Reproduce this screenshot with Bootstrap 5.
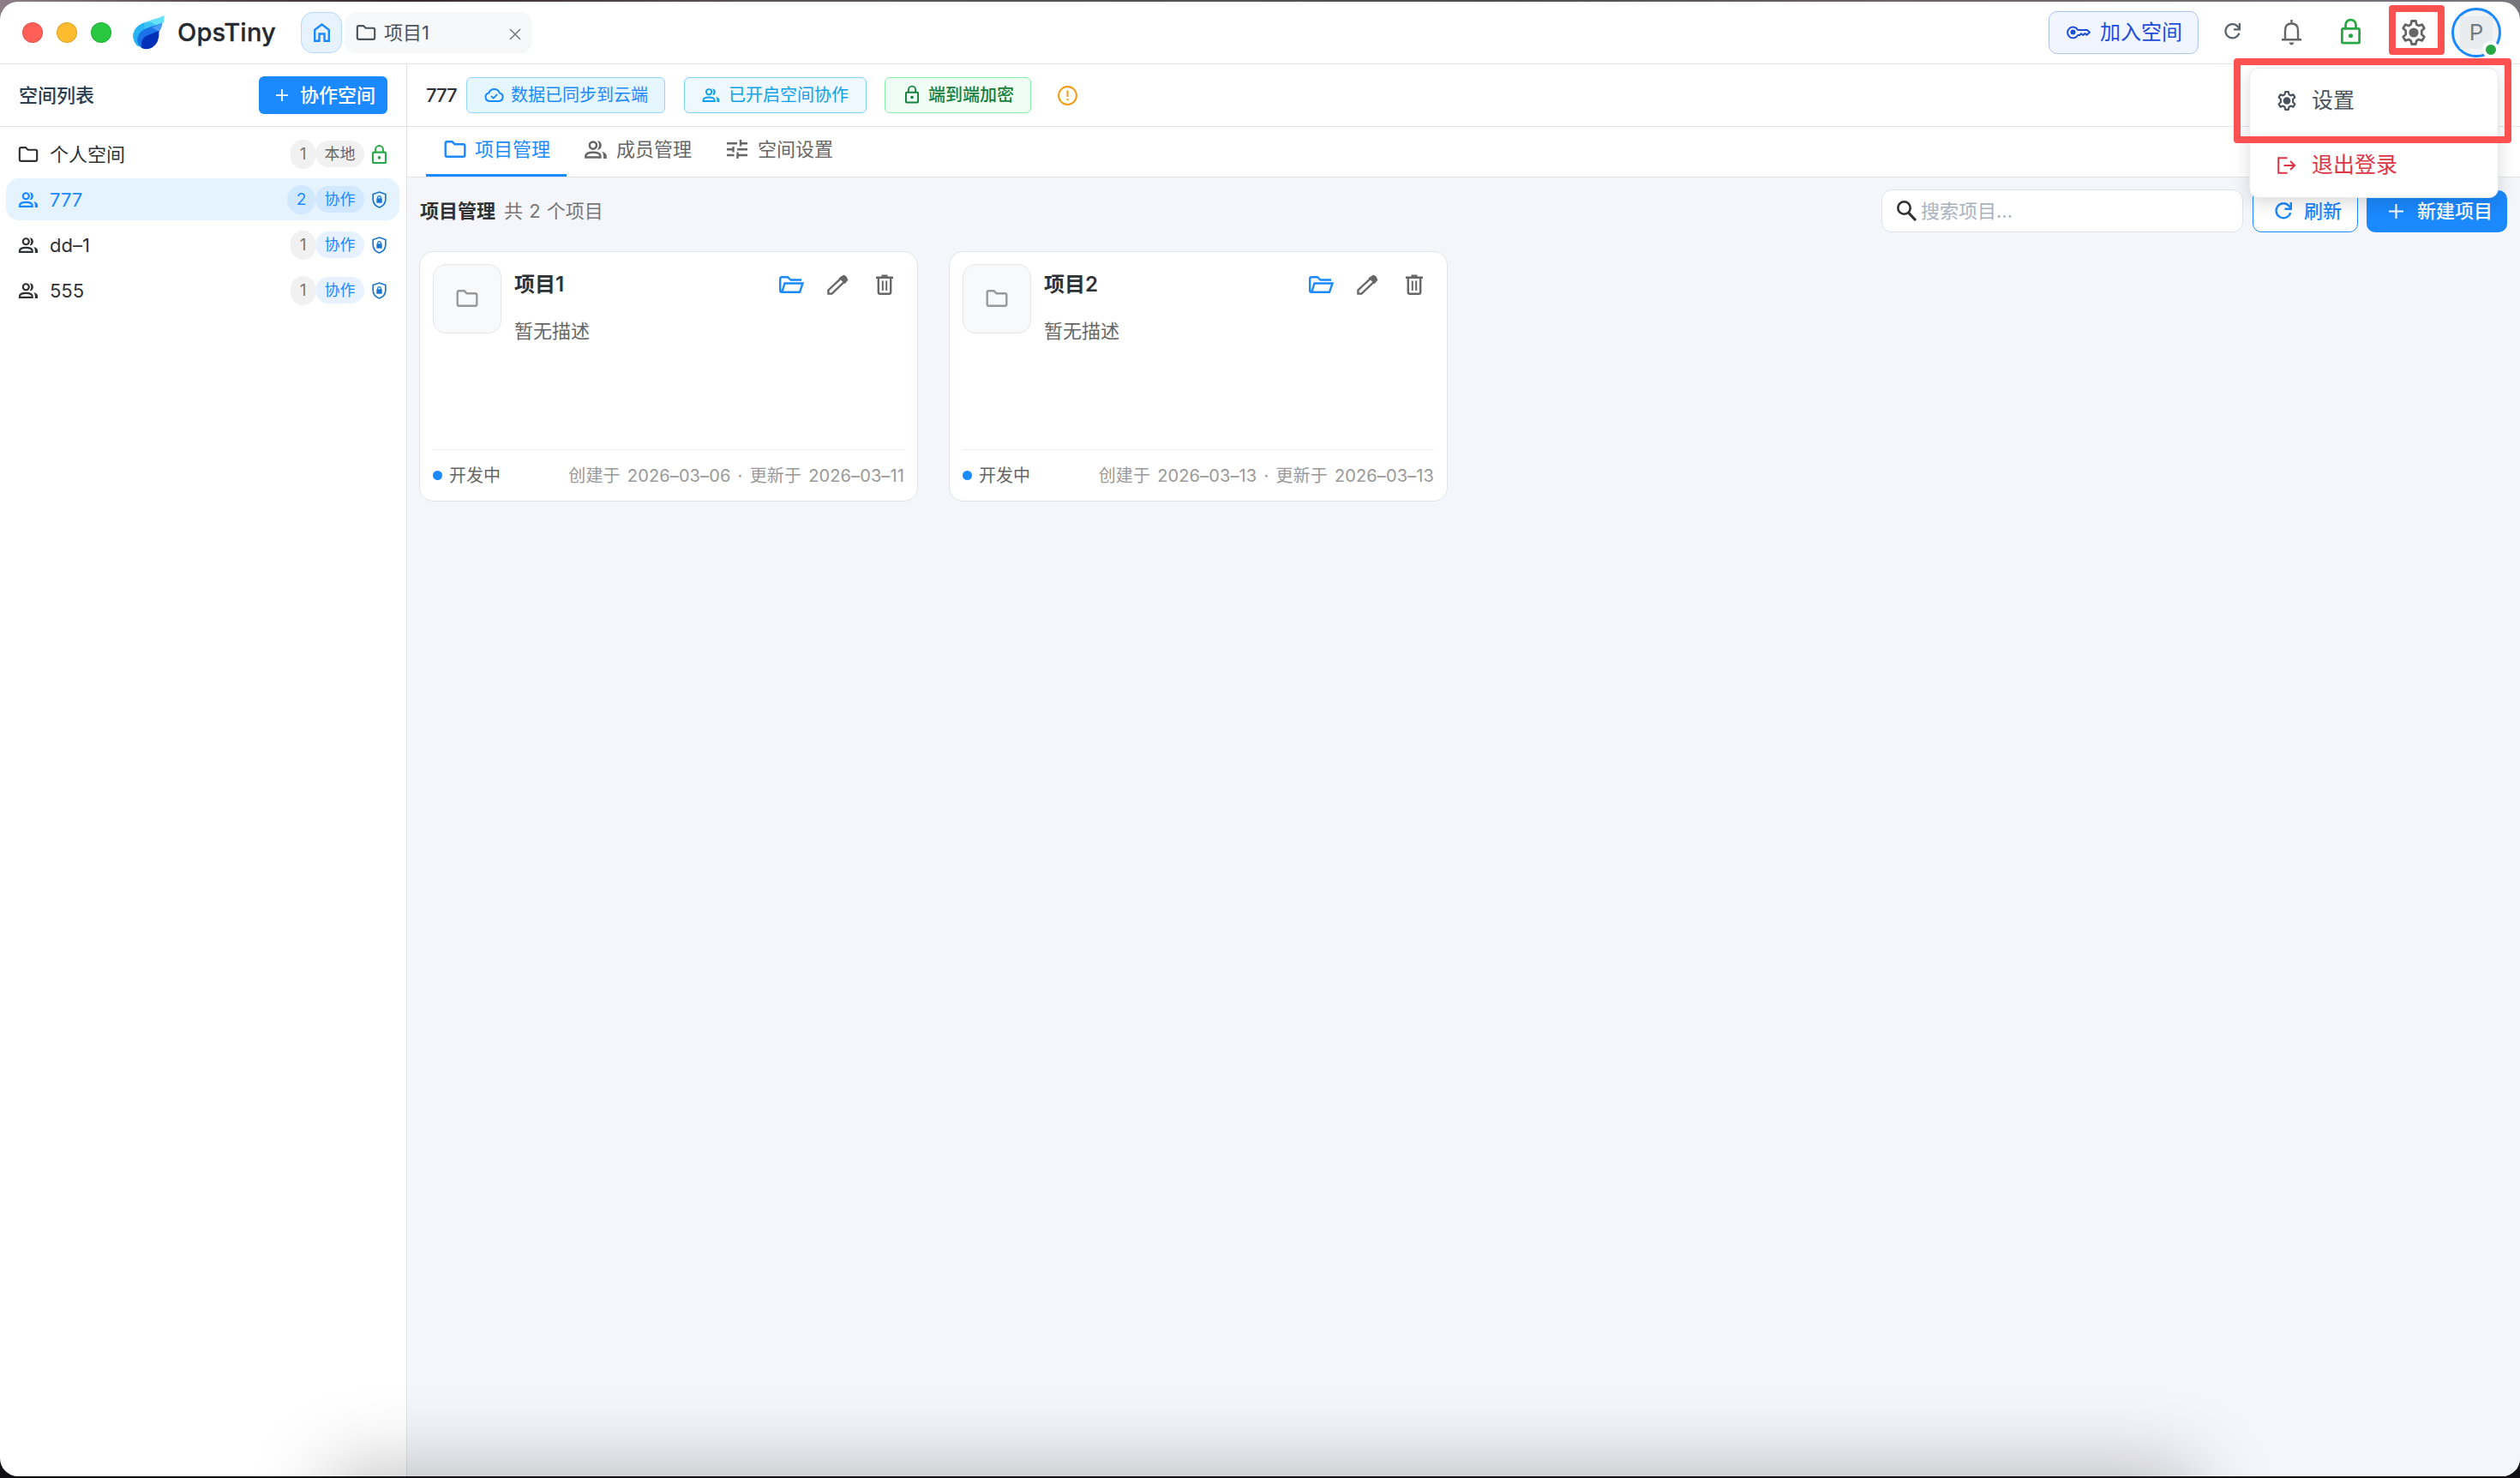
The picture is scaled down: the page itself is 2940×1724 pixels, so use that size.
<!DOCTYPE html>
<html lang="zh-CN">
<head>
<meta charset="utf-8">
<title>OpsTiny</title>
<link rel="stylesheet" href="https://cdn.jsdelivr.net/npm/bootstrap@5.3.0/dist/css/bootstrap.min.css">
<style>
:root{--blue:#1b89ff;--line:#e1e3e6}
html,body{height:100%;overflow:hidden}
body{margin:0;background:#101012;font-family:"Inter","Noto Sans CJK SC",sans-serif;font-size:22px;line-height:1;color:#303133;padding:2px 0}
.desk-strip{background:linear-gradient(90deg,#8d7f85 0,#5b4b50 8%,#3a2a2e 16%,#5c5558 30%,#4e4e50 60%,#6d6266 75%,#77757c 100%);height:30px;top:0;z-index:-1}
svg{display:block;flex:none;fill:none;stroke:currentColor;stroke-width:2.4;overflow:visible}
.logo{stroke:none;margin-left:9px}
.app-window{height:1720px;background:#fff;border-radius:21px;overflow:hidden}
.topbar{height:73px;border-bottom:1px solid var(--line);padding-left:26px;padding-right:22px;padding-bottom:1px}
.light{width:24px;height:24px;border-radius:50%;border:1px solid #0002;margin-right:16px}
.brand-name{font-size:29px;font-weight:500;color:#24292f;margin-left:15px;width:127px;letter-spacing:.2px;-webkit-text-stroke:.3px #24292f}
.home-tab{width:48px;height:48px;border-radius:14px;background:#e6f3ff;border:1px solid #b5d8ff;color:var(--blue);margin-left:17px}
.proj-tab{width:219px;height:48px;border-radius:14px;background:#f7f8fa;margin-left:3px;padding:0 14px 0 13px;color:#4b535c}
.join-btn{width:175px;height:50px;border:1px solid #adc2f4;border-radius:10px;background:#f0f5ff;color:#1d4ed8;font-size:24px;padding-left:20px;font-weight:400}
.avatar{width:58px;height:58px;border:3px solid var(--blue);border-radius:50%;background:#f2f3f5;color:#727b84;font-size:26px}
.avatar-core{width:38px;height:38px;background:#e9ecef}
.presence{right:-1px;bottom:-4px;width:20px;height:20px;border-radius:50%;background:#27a844;border:4px solid #fff}
.sidebar{width:475px;border-right:1px solid var(--line);flex:none}
.side-head{height:73px;border-bottom:1px solid var(--line);padding:0 22px}
.side-title{font-weight:500;color:#2c3e50}
.btn-solid{background:var(--blue);color:#fff;border:0;font-size:22px;line-height:1;padding:0}
.side-btn{width:150px;height:44px;border-radius:6px;padding-left:20px}
.space-row{height:49px;margin:0 8px 4px 7px;border-radius:15px;padding:0 15px 0 14px}
.space-row.current{background:#e5f3ff;color:var(--blue)}
.cnt{width:29px;height:34px;border-radius:15px;background:#f1f1f1;color:#777;font-size:19px}
.kind{width:57px;height:31px;border-radius:16px;background:#f1f1f1;color:#666;font-size:18px;margin-right:9px}
.kind.team{background:#e8f1ff;color:var(--blue)}
.current .cnt,.current .kind{background:#d1e8ff;color:var(--blue)}
.current .cnt{width:33px;border-radius:17px}
.main-pane{background:#f5f6fb;min-width:0}
.space-bar{height:73px;background:#fff;border-bottom:1px solid var(--line);padding-left:22px}
.chip{height:42px;border:1px solid;border-radius:6px;font-size:20px}
.chip-sync{width:232px;background:#e6f6ff;border-color:#91d5ff;color:var(--blue);padding-left:20px;margin-left:11px}
.chip-team{width:213px;background:#f0f8ff;border-color:#7dd3fc;color:#0fa0e6;padding-left:20px;margin-left:22px}
.chip-lock{width:171px;background:#f0fdf4;border-color:#86efac;color:#15803d;padding-left:23px;margin-left:21px;font-weight:500}
.pane-tabs{height:59px;background:#fff;border-bottom:1px solid var(--line);padding-left:22px;color:#666}
.pane-tab{height:58px;padding:0 0 3px 21px;border-bottom:3px solid transparent}
.pane-tab.on{width:164px;color:var(--blue);border-color:var(--blue)}
.tools{height:86px;padding:0 15px 8px 15px}
.tools-title{font-weight:600;font-size:22px}
.search-box{width:422px;height:50px;border:1px solid #dfe2e8;border-radius:12px;background:#fff;padding-left:17px;color:#a9b2bf}
.btn-line{width:123px;height:50px;border:1px solid var(--blue);border-radius:10px;background:#fff;color:var(--blue);font-size:22px;line-height:1;padding:0 0 0 25px;margin-left:11px}
.btn-new{width:164px;height:49px;border-radius:10px;padding-left:26px;margin-left:10px}
.proj-list{padding-left:14px;gap:36px}
.proj-card{width:582px;height:292px;border:1px solid #e1e4e8;border-radius:16px;background:#fff;padding:14px 15px 0}
.thumb{width:80px;height:81px;border:1px solid #e4e6ea;border-radius:15px;background:#f8f9fb;color:#999;flex:none}
.proj-name{font-weight:600;font-size:24px;color:#303133}
.proj-desc{color:#666;font-size:22px}
.proj-foot{border-top:1px solid #ebedf0;height:60px;font-size:20px;color:#666}
.stamp{color:#999;font-size:20px;letter-spacing:.12px;word-spacing:2.4px}
.state-dot{width:11px;height:11px;border-radius:50%;background:var(--blue);margin-right:8px}
.user-menu{left:2624px;top:79px;width:291px;height:152px;border:1px solid #e8eaed;border-radius:11px;background:#fff;box-shadow:0 6px 20px rgba(0,0,0,.14);font-size:25px;z-index:5}
.menu-line{height:75px;padding-left:32px;color:#4a535c}
.menu-line.exit{color:#dc3545}
.callout-ring{border:8px solid #fc5151;border-radius:4px;z-index:6}
.ring-gear{left:2787px;top:6px;width:65px;height:58px}
.ring-menu{left:2606px;top:68px;width:324px;height:99px}
.floor-shade{left:0;bottom:2px;width:2940px;height:140px;overflow:hidden;border-radius:0 0 21px 21px;z-index:3}
.floor-shade::after{content:"";position:absolute;left:395px;right:390px;top:142px;height:120px;box-shadow:0 0 90px 10px rgba(0,0,0,.25)}
</style>
<script src="https://cdn.jsdelivr.net/npm/bootstrap@5.3.0/dist/js/bootstrap.bundle.min.js"></script>
</head>
<body>
<svg width="0" height="0" class="position-absolute">
<symbol id="folder" viewBox="0 0 25 20"><path d="M1.2 3.2q0-2 2-2H9l3 3H21.800q2 0 2 2V16.800q0 2-2 2H3.200q-2 0-2-2Z"/></symbol>
<symbol id="people" viewBox="0 0 25 20"><circle cx="9.500" cy="5.300" r="3.900"/><path d="M1.300 18.700V17q.6-3.800 8.200-3.800T17.700 17v1.700Z"/><path d="M14.200.2q4.800.4 4.800 5.100t-4.800 5.100q2-2 2-5.100t-2-5.100ZM19.500 12.200q5.300 1.600 5.300 5V20h-3.600v-2.800q0-3-1.700-5Z" fill="currentColor" stroke="none"/></symbol>
<symbol id="lock" viewBox="0 0 20 26"><rect x="1.200" y="10.200" width="17.600" height="14.600" rx="1"/><path d="M4.800 10V6.500a5.200 5.200 0 0 1 10.400 0V10"/><circle cx="10" cy="17.500" r="2.200" fill="currentColor" stroke="none"/></symbol>
<symbol id="shield" viewBox="0 0 20 24"><path d="M10 1.300 18.800 4.300v7q0 8-8.800 11.400Q1.200 19.300 1.200 11.300v-7Z" stroke-width="2"/><rect x="6.200" y="10" width="7.600" height="6.400" fill="currentColor" stroke="none"/><path d="M7.800 10.500V9a2.200 2.200 0 0 1 4.400 0v1.500" stroke-width="1.500"/></symbol>
<symbol id="gear" viewBox="0 0 28 30"><path d="M11.600 1.500h4.800l.9 4 2.600 1.500 3.900-1.300 2.500 4.200-3 2.800v4.600l3 2.800-2.500 4.200-3.900-1.300-2.600 1.500-.9 4h-4.800l-.9-4-2.600-1.500-3.900 1.300-2.500-4.200 3-2.800v-4.600l-3-2.800 2.500-4.200 3.900 1.300 2.600-1.500Z" stroke-width="2.800" stroke-linejoin="round"/><circle cx="14" cy="15" r="5.600" fill="currentColor" stroke="none"/></symbol>
<symbol id="reload" viewBox="0 0 20 20"><path d="M18.200 12.200A8.500 8.500 0 1 1 16.500 4.200L18.500 6.500"/><path d="M18.800 0V7.800H11.500"/></symbol>
<symbol id="plus" viewBox="0 0 16 16"><path d="M8 0V16M0 8H16" stroke-width="2"/></symbol>
</svg>
<div class="desk-strip position-absolute w-100"></div>

<div class="app-window d-flex flex-column">
  <header class="topbar d-flex align-items-center">
    <span class="light" style="background:#ff5f57"></span><span class="light" style="background:#febc2e"></span><span class="light" style="background:#28c840"></span>
    <svg class="logo" width="37" height="40" viewBox="0 0 37 40">
      <path d="M5 35.500Q-3 26 2 17 6 10 16 7.500L28 8 30 24 14 38Z" fill="#27b4f2"/>
      <path d="M13 9Q17 6.500 24 4.500 31 3 36.500 0V6q-1 4.500-6.500 7L20 15Z" fill="#66e0ff"/>
      <path d="M13 9Q18 7 22 8q4 2 6 5L14 18Z" fill="#3fc4f6"/>
      <path d="M10 38Q2 30 7 22 11 16 20 13.500 28 11 34 9q0 5-3.500 10L16 39Z" fill="#1a73e8"/>
      <path d="M34 9q0 7-4 9.500L22 14Q28 12 34 9Z" fill="#4c9bff"/>
      <path d="M30.500 18q1 14-8 19.500-6 3.200-12 .5-2-9 4-13.500Q19 22 30.500 18Z" fill="#0030b8"/>
    </svg>
    <div class="brand-name">OpsTiny</div>
    <div class="home-tab d-flex align-items-center justify-content-center"><svg width="19" height="22" viewBox="0 0 19 22"><path d="M1.200 20.800V7.800L9.500 1.500l8.300 6.300v13H12.500V12.500h-6v8.300Z"/></svg></div>
    <div class="proj-tab d-flex align-items-center"><svg width="24" height="18"><use href="#folder"/></svg><span style="margin-left:9px">项目1</span><svg class="ms-auto mt-1" width="12" height="12" viewBox="0 0 12 12" style="color:#777"><path d="M0 0 12 12M12 0 0 12" stroke-width="1.500"/></svg></div>
    <div class="join-btn d-flex align-items-center ms-auto"><svg width="28" height="15" viewBox="0 0 28 15"><path d="M13.200 5H24l3 2.700-3.500 3-2-1.700-2.200 1.900-2.300-1.700-1.800 1.700H13.200A6.400 6.400 0 1 1 13.200 5Z" stroke-width="2" stroke-linejoin="round"/><circle cx="7.500" cy="7.500" r="3" fill="currentColor" stroke="none"/></svg><span style="margin-left:11px">加入空间</span></div>
    <svg width="19" height="19" style="margin-left:30px;margin-top:-3px;color:#5a636e"><use href="#reload"/></svg>
    <svg width="23" height="30" viewBox="0 0 23 30" style="margin-left:48px;color:#666"><path d="M4 23V12.500Q4 4.500 11.500 4.500T19 12.500V23M0 23.200H23M11.500 0V5"/><path d="M8.500 26.500h6q-1 3-3 3t-3-3Z" fill="currentColor" stroke="none"/></svg>
    <svg width="23" height="31" style="margin-left:46px;margin-top:-3px;color:#27a844"><use href="#lock"/></svg>
    <svg width="28" height="30" style="margin-left:48px;color:#666"><use href="#gear"/></svg>
    <div class="avatar position-relative d-flex align-items-center justify-content-center" style="margin-left:30px"><span class="avatar-core d-flex align-items-center justify-content-center">P</span><span class="presence position-absolute"></span></div>
  </header>

  <div class="d-flex flex-grow-1">
    <aside class="sidebar">
      <div class="side-head d-flex align-items-center justify-content-between">
        <span class="side-title">空间列表</span>
        <button class="btn btn-solid side-btn d-flex align-items-center fw-medium"><svg width="14" height="14"><use href="#plus"/></svg><span style="margin-left:14px">协作空间</span></button>
      </div>
      <div style="padding-top:7px">
        <div class="space-row d-flex align-items-center"><svg width="24" height="18"><use href="#folder"/></svg><span style="margin-left:13px">个人空间</span><span class="cnt ms-auto d-flex align-items-center justify-content-center">1</span><span class="kind d-flex align-items-center justify-content-center">本地</span><svg width="17" height="22" style="color:#27a844"><use href="#lock"/></svg></div>
        <div class="space-row current d-flex align-items-center"><svg width="24" height="18"><use href="#people"/></svg><span style="margin-left:13px">777</span><span class="cnt ms-auto d-flex align-items-center justify-content-center">2</span><span class="kind team d-flex align-items-center justify-content-center">协作</span><svg width="17" height="20" style="color:#1976d2"><use href="#shield"/></svg></div>
        <div class="space-row d-flex align-items-center"><svg width="24" height="18"><use href="#people"/></svg><span style="margin-left:13px">dd–1</span><span class="cnt ms-auto d-flex align-items-center justify-content-center">1</span><span class="kind team d-flex align-items-center justify-content-center">协作</span><svg width="17" height="20" style="color:#1976d2"><use href="#shield"/></svg></div>
        <div class="space-row d-flex align-items-center"><svg width="24" height="18"><use href="#people"/></svg><span style="margin-left:13px">555</span><span class="cnt ms-auto d-flex align-items-center justify-content-center">1</span><span class="kind team d-flex align-items-center justify-content-center">协作</span><svg width="17" height="20" style="color:#1976d2"><use href="#shield"/></svg></div>
      </div>
    </aside>

    <main class="main-pane flex-grow-1">
      <div class="space-bar d-flex align-items-center">
        <span class="fw-medium" style="width:36px;letter-spacing:-1px">777</span>
        <span class="chip chip-sync d-flex align-items-center"><svg width="23" height="16" viewBox="0 0 23 16"><path d="M6 14.900a4.800 4.800 0 0 1-.6-9.500 6.500 6.500 0 0 1 12.300 0 4.800 4.800 0 0 1-.6 9.500Z" stroke-width="2"/><path d="m8 9 2.600 2.600 4.600-4.600" stroke-width="1.800"/></svg><span style="margin-left:8px">数据已同步到云端</span></span>
        <span class="chip chip-team d-flex align-items-center"><svg width="21" height="16"><use href="#people"/></svg><span style="margin-left:10px">已开启空间协作</span></span>
        <span class="chip chip-lock d-flex align-items-center"><svg width="16" height="22" style="margin-top:-3px"><use href="#lock"/></svg><span style="margin-left:11px">端到端加密</span></span>
        <svg width="23" height="23" viewBox="0 0 23 23" style="margin-left:31px;color:#f59a0b"><circle cx="11.500" cy="11.500" r="10.400" stroke-width="2"/><path d="M11.500 5.500V13M11.500 15v2.300" stroke-width="2"/></svg>
      </div>
      <nav class="pane-tabs d-flex">
        <div class="pane-tab on d-flex align-items-center"><svg width="26" height="20"><use href="#folder"/></svg><span style="margin-left:10px">项目管理</span></div>
        <div class="pane-tab d-flex align-items-center"><svg width="26" height="21"><use href="#people"/></svg><span style="margin-left:11px">成员管理</span></div>
        <div class="pane-tab d-flex align-items-center" style="padding-left:41px"><svg width="24" height="22" viewBox="0 0 24 22"><path d="M0 4.200H12M16 0V7.500M16 4.200H24M0 11.200H7.500M7.500 8V14.500M12 11.200H24M0 18H8.500M12.500 14.500V22M12.500 18H24"/></svg><span style="margin-left:12px">空间设置</span></div>
      </nav>
      <div class="tools d-flex align-items-center">
        <span class="tools-title">项目管理</span><span style="margin-left:10px;color:#777;word-spacing:1px">共 2 个项目</span>
        <div class="search-box d-flex align-items-center ms-auto"><svg width="23" height="24" viewBox="0 0 23 24" style="color:#303133"><circle cx="8.500" cy="8.500" r="7.200" stroke-width="2.600"/><path d="m13.500 14 8.500 9" stroke-width="3.200"/></svg><span style="margin-left:5px">搜索项目...</span></div>
        <button class="btn btn-line d-flex align-items-center fw-medium"><svg width="20" height="20"><use href="#reload"/></svg><span style="margin-left:14px">刷新</span></button>
        <button class="btn btn-solid btn-new d-flex align-items-center fw-medium"><svg width="17" height="17"><use href="#plus"/></svg><span style="margin-left:16px">新建项目</span></button>
      </div>
      <div class="proj-list d-flex">
        <article class="proj-card d-flex flex-column">
          <div class="d-flex flex-grow-1">
            <div class="thumb d-flex align-items-center justify-content-center"><svg width="26" height="20" style="margin-top:-2px"><use href="#folder"/></svg></div>
            <div class="flex-grow-1" style="margin-left:15px">
              <div class="d-flex align-items-center" style="height:48px"><span class="proj-name">项目1</span>
                <svg class="ms-auto" width="29" height="20" viewBox="0 0 29 20" style="color:var(--blue)"><path d="M26 4.500H13.500L10 1.200H3.200q-2 0-2 2V17q0 1.800 2 1.800H24L27.500 8.500H6.500L3.500 18"/></svg>
                <svg width="24" height="23" viewBox="0 0 24 23" style="margin-left:27px;color:#666"><path d="M1.400 21.600V17.500L17.500 2.300q2-1.600 4 0 1.700 2 0 4L5.500 21.600Z"/><path d="m15.500 3.500 5 5 2.500-3-3.500-4.500Z" fill="currentColor"/></svg>
                <svg width="20" height="23" viewBox="0 0 20 23" style="margin:0 13px 0 33px;color:#666"><path d="M0 2.700H20M6.500.800h7M2.800 3V19.700q0 2 2 2H15.200q2 0 2-2V3"/><path d="M7.800 6.500V18M12.200 6.500V18" stroke-width="2"/></svg>
              </div>
              <div class="proj-desc" style="margin-top:19px">暂无描述</div>
            </div>
          </div>
          <div class="proj-foot d-flex align-items-center"><span class="state-dot"></span><span>开发中</span><span class="stamp ms-auto">创建于 2026–03–06 · 更新于 2026–03–11</span></div>
        </article>
        <article class="proj-card d-flex flex-column">
          <div class="d-flex flex-grow-1">
            <div class="thumb d-flex align-items-center justify-content-center"><svg width="26" height="20" style="margin-top:-2px"><use href="#folder"/></svg></div>
            <div class="flex-grow-1" style="margin-left:15px">
              <div class="d-flex align-items-center" style="height:48px"><span class="proj-name">项目2</span>
                <svg class="ms-auto" width="29" height="20" viewBox="0 0 29 20" style="color:var(--blue)"><path d="M26 4.500H13.500L10 1.200H3.200q-2 0-2 2V17q0 1.800 2 1.800H24L27.500 8.500H6.500L3.500 18"/></svg>
                <svg width="24" height="23" viewBox="0 0 24 23" style="margin-left:27px;color:#666"><path d="M1.400 21.600V17.500L17.500 2.300q2-1.600 4 0 1.700 2 0 4L5.500 21.600Z"/><path d="m15.500 3.500 5 5 2.500-3-3.500-4.500Z" fill="currentColor"/></svg>
                <svg width="20" height="23" viewBox="0 0 20 23" style="margin:0 13px 0 33px;color:#666"><path d="M0 2.700H20M6.500.800h7M2.800 3V19.700q0 2 2 2H15.200q2 0 2-2V3"/><path d="M7.800 6.500V18M12.200 6.500V18" stroke-width="2"/></svg>
              </div>
              <div class="proj-desc" style="margin-top:19px">暂无描述</div>
            </div>
          </div>
          <div class="proj-foot d-flex align-items-center"><span class="state-dot"></span><span>开发中</span><span class="stamp ms-auto">创建于 2026–03–13 · 更新于 2026–03–13</span></div>
        </article>
      </div>
    </main>
  </div>
</div>

<div class="floor-shade position-absolute"></div>
<div class="user-menu position-absolute">
  <div class="menu-line d-flex align-items-center"><svg width="22" height="23"><use href="#gear"/></svg><span style="margin-left:18px">设置</span></div>
  <div class="menu-line exit d-flex align-items-center"><svg width="22" height="20" viewBox="0 0 22 20"><path d="M11.500 1.200H1.200V18.800H11.500M7.500 10H20M15 5l5.200 5L15 15" stroke-width="2"/></svg><span style="margin-left:18px">退出登录</span></div>
</div>
<div class="callout-ring ring-gear position-absolute"></div>
<div class="callout-ring ring-menu position-absolute"></div>
</body>
</html>
